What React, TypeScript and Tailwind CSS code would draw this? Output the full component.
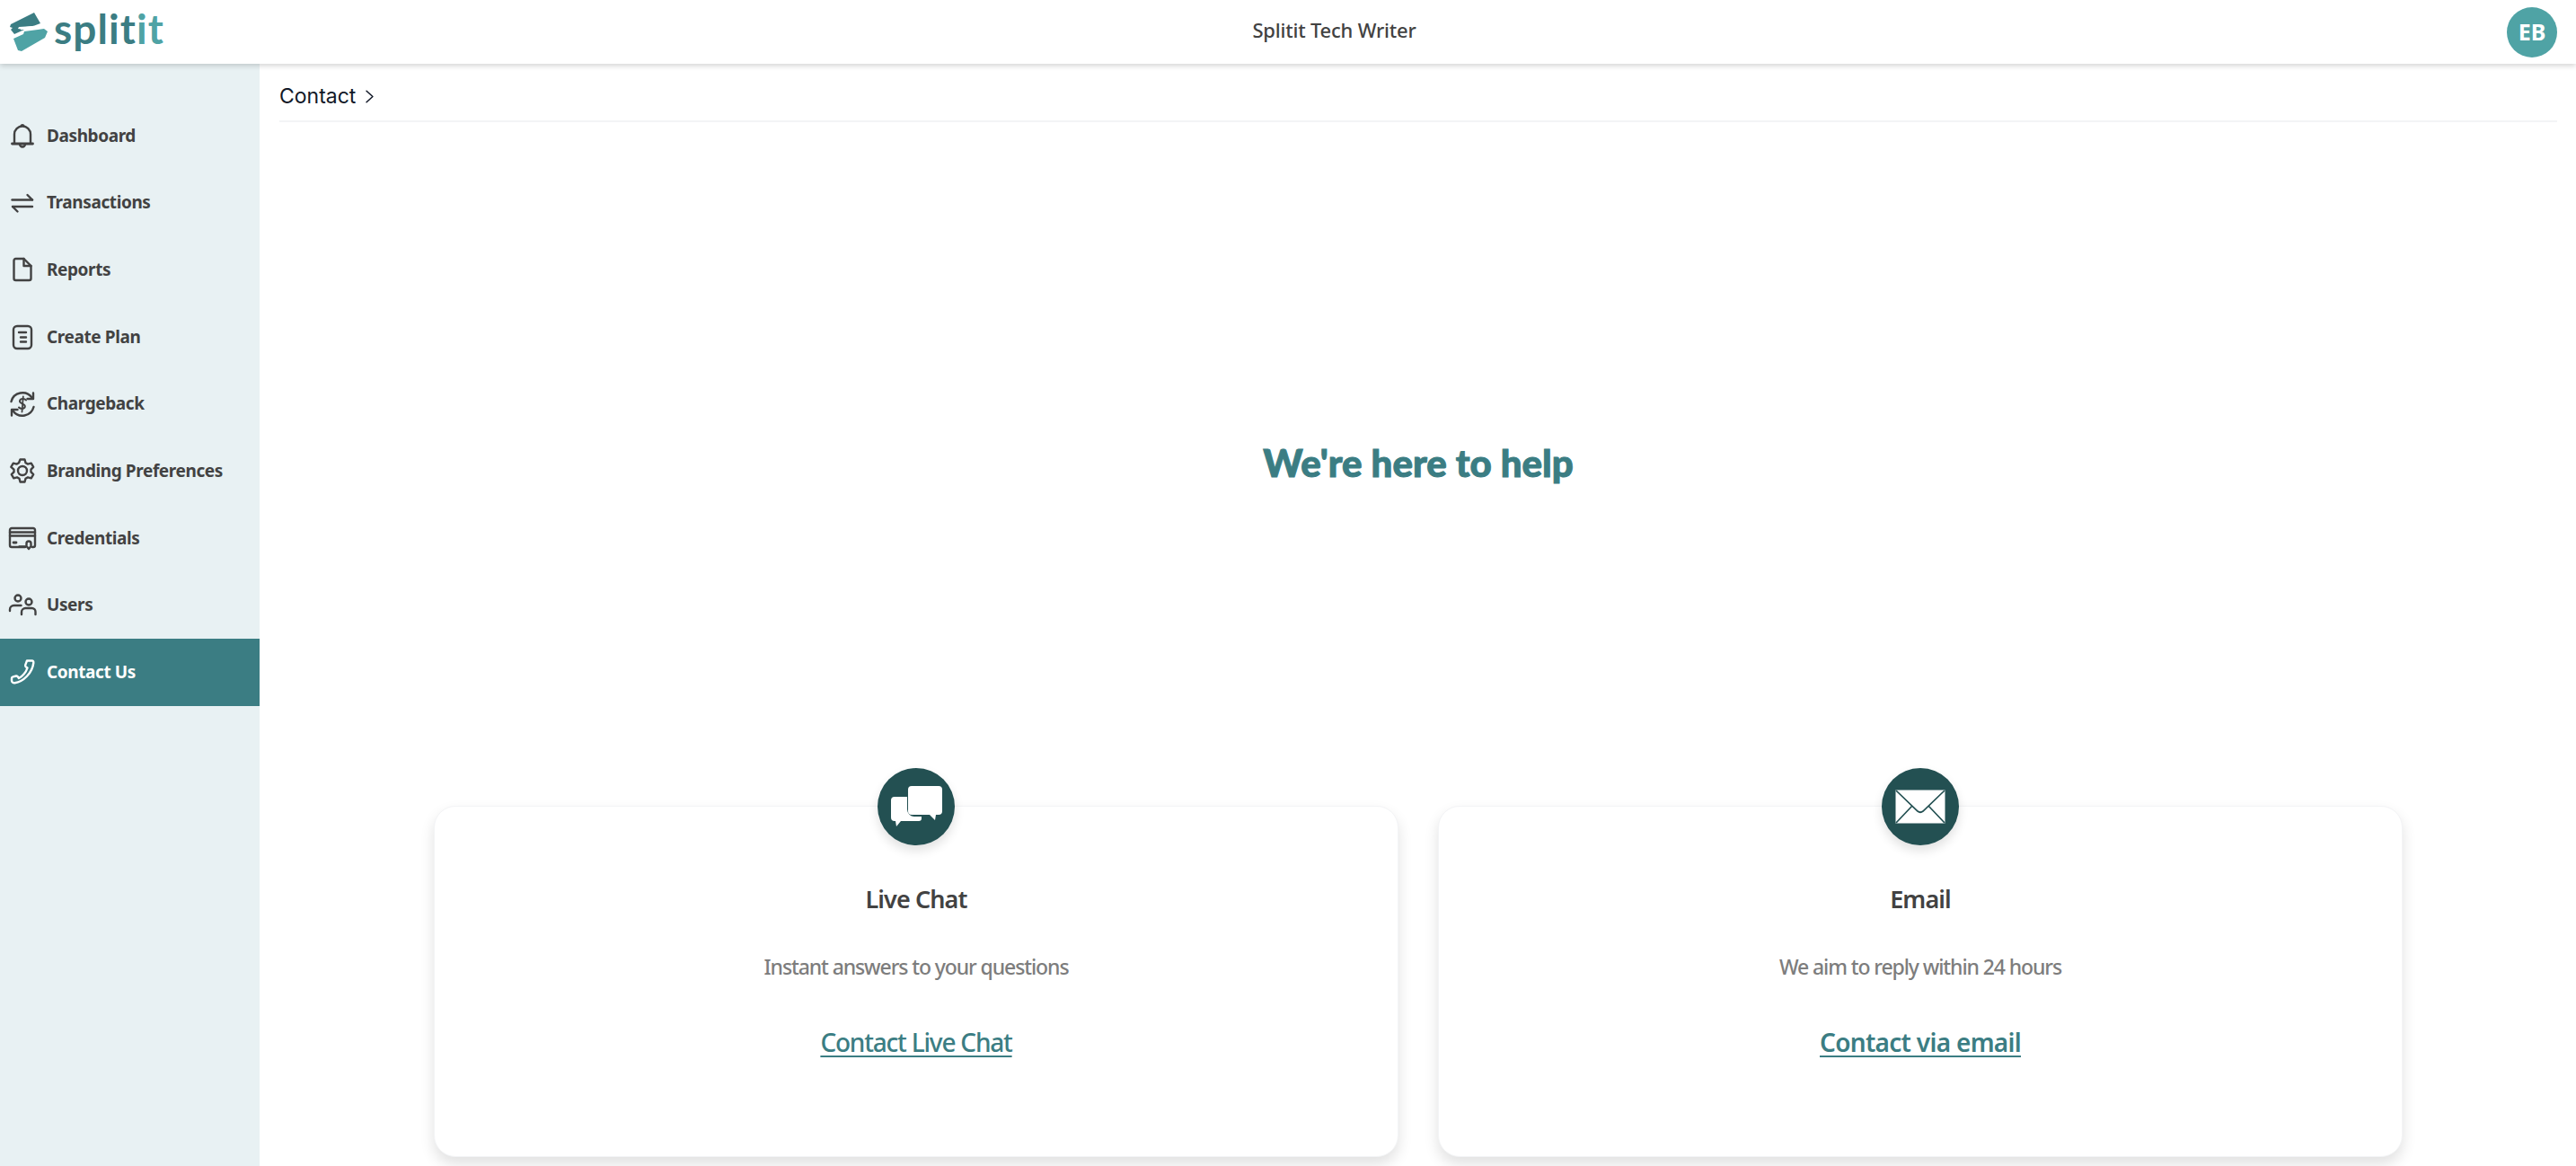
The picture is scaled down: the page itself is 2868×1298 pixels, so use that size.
import React from 'react';

const Svg: React.FC<{ children: React.ReactNode }> = ({ children }) => (
  <svg viewBox="0 0 32 32" width="32" height="32" fill="none" stroke="currentColor" strokeWidth="2.4" strokeLinecap="round" strokeLinejoin="round">
    {children}
  </svg>
);

const BellIcon = () => (
  <Svg>
    <path d="M14.5 5.2a1.6 1.6 0 0 1 3 0" />
    <path d="M7 24V14.5a9 9 0 0 1 18 0V24" />
    <path d="M4.5 25h23" strokeWidth="2.8" />
    <path d="M13 25.5a3 3 0 0 0 6 0" />
  </Svg>
);

const TransferIcon = () => (
  <Svg>
    <path d="M4.5 12.5h22.5" />
    <path d="M21.5 7l5.5 5.5" />
    <path d="M27 20H5" />
    <path d="M10.5 25.5L5 20" />
  </Svg>
);

const ReportIcon = () => (
  <Svg>
    <path d="M17.5 4H8.5a2 2 0 0 0-2 2v20a2 2 0 0 0 2 2h15a2 2 0 0 0 2-2V12z" />
    <path d="M17.5 4v8h8" />
  </Svg>
);

const PlanIcon = () => (
  <Svg>
    <rect x="6" y="4" width="20" height="25" rx="4" />
    <path d="M12 11h8M14 16.500h6M14 21.500h6" />
  </Svg>
);

const ChargebackIcon = () => (
  <Svg>
    <path d="M3.500 13A13 13 0 0 1 26.500 8.500" />
    <path d="M28 3.500V10h-6.500" />
    <path d="M28.500 19A13 13 0 0 1 5.500 23.500" />
    <path d="M4 28.500V22h6.500" />
    <path d="M20 11.500c-1.200-1.800-6.300-2.400-7 .7-.800 3.300 6.500 3 5.800 6.600-.6 2.800-5.300 2.500-6.800.7" strokeWidth="2" />
    <path d="M16.800 7.500l-1.300 17" strokeWidth="1.800" />
  </Svg>
);

const GearIcon = () => (
  <Svg>
    <circle cx="16" cy="16" r="5" />
    <path d="M13.500 3.500h5l1 3.700 2.500 1.400 3.700-1 2.500 4.300-2.700 2.700v2.800l2.700 2.700-2.500 4.300-3.700-1-2.500 1.400-1 3.700h-5l-1-3.700-2.500-1.400-3.700 1-2.500-4.300 2.700-2.700v-2.800L3.300 11.900l2.500-4.300 3.700 1 2.500-1.400z" />
  </Svg>
);

const CardIcon = () => (
  <Svg>
    <path d="M27 26h1a2 2 0 0 0 2-2V7a2 2 0 0 0-2-2H4a2 2 0 0 0-2 2v17a2 2 0 0 0 2 2h15" />
    <path d="M2 9.500h28M2 13.500h28" />
    <path d="M6 21h3" strokeWidth="2.800" />
    <path d="M12.500 25.500H19" />
    <path d="M23 28l-2.500-3v-3a2.500 2.500 0 0 1 5 0v3z" />
  </Svg>
);

const UsersIcon = () => (
  <Svg>
    <circle cx="11" cy="8" r="3.500" />
    <circle cx="23" cy="12" r="3.500" />
    <path d="M2 22v-1.500A4.500 4.500 0 0 1 6.500 16h8" />
    <path d="M15 26v-2.500a4.500 4.500 0 0 1 4.500-4.500h7a4 4 0 0 1 4 4v3" />
  </Svg>
);

const PhoneIcon = () => (
  <Svg>
    <path d="M21 3.500h5.500c1.500 0 2 1 1.800 2.500C27 17 17 27 7.500 28.300c-2 .2-3.500-1-3.500-2.800v-2.500c0-1 .6-1.500 1.500-1.700l3.500-.8c1-.2 1.500.2 2 1l1 1.500c3.500-1.500 8-6.500 9.500-11.500l-1.500-1c-.8-.6-1-1.200-.8-2.200z" />
  </Svg>
);

const ChatIcon = () => (
  <svg viewBox="0 0 58 46" width="58" height="46" fill="currentColor">
    <path d="M5 12h14v14a8 8 0 0 0 8 8h8v2a3 3 0 0 1-3 3H12l-5 6-1-6H5a4 4 0 0 1-4-4V16a4 4 0 0 1 4-4z" />
    <path d="M24 0h30a4 4 0 0 1 4 4v24a4 4 0 0 1-4 4h-3l-1 6-6-6H24a4 4 0 0 1-4-4V4a4 4 0 0 1 4-4z" />
  </svg>
);

const MailIcon = () => (
  <svg viewBox="0 0 56 38" width="56" height="38">
    <rect x="0.500" y="0.500" width="55" height="37" fill="#ffffff" />
    <path d="M1 1l24 23q3 2.500 6 0L55 1M1 37l18-19M55 37L37 18" fill="none" stroke="#235052" strokeWidth="1.700" />
  </svg>
);

const navItems = [
  { label: 'Dashboard', icon: <BellIcon /> },
  { label: 'Transactions', icon: <TransferIcon /> },
  { label: 'Reports', icon: <ReportIcon /> },
  { label: 'Create Plan', icon: <PlanIcon /> },
  { label: 'Chargeback', icon: <ChargebackIcon /> },
  { label: 'Branding Preferences', icon: <GearIcon /> },
  { label: 'Credentials', icon: <CardIcon /> },
  { label: 'Users', icon: <UsersIcon /> },
  { label: 'Contact Us', icon: <PhoneIcon />, active: true },
];

const Logo = () => (
  <div className="flex items-center w-[171px] h-[46px]">
    <svg viewBox="0 0 44 46" width="44" height="46" className="shrink-0">
      <path d="M3 14L29 1l7 12-8 3-16 1-1 2 7 1-11 5-4-5 2-2-3-1z" fill="#3b7d83" />
      <path d="M6 30l11-5 1-3 15-2 7-1 4 3-3 7-26 15-4-1z" fill="#4fa3a5" />
      <path d="M14 19l15-2" stroke="#ffffff" strokeWidth="2.500" fill="none" />
    </svg>
    <span className="ml-[7px] text-[46px] leading-none font-bold font-['Lato',sans-serif] tracking-[1.1px] text-[#3b7d83] -mt-[8px]">
      split<span className="text-[#4fa3a5]">it</span>
    </span>
  </div>
);

const ContactCard: React.FC<{ icon: React.ReactNode; title: string; text: string; link: string; linkClass: string }> = ({ icon, title, text, link, linkClass }) => (
  <div className="relative flex-1 h-[391px] bg-white rounded-[24px] border border-gray-100 shadow-[0_8px_16px_rgba(0,0,0,0.12)] flex flex-col items-center">
    <div className="absolute -top-[43px] w-[86px] h-[86px] rounded-full bg-[#235052] text-white flex items-center justify-center shadow-[0_6px_12px_rgba(0,0,0,0.12)]">
      {icon}
    </div>
    <h3 className="mt-[85px] text-[27px] leading-[36px] font-semibold text-[#424242] tracking-[-0.9px]">{title}</h3>
    <p className="mt-[41px] text-[23px] leading-[32px] font-medium text-[#7d7d7d] tracking-[-1.1px]">{text}</p>
    <a href="#" className={`mt-[49px] text-[28px] leading-[38px] text-[#3b7d83] underline underline-offset-4 ${linkClass}`}>{link}</a>
  </div>
);

export default function App() {
  return (
    <div className="h-screen overflow-hidden flex flex-col bg-white font-['Noto_Sans',sans-serif]">
      <header className="relative z-10 h-[71px] shrink-0 bg-white flex items-center justify-between pl-[9px] pr-[21px] shadow-[0_2px_6px_rgba(0,0,0,0.18)]">
        <Logo />
        <span className="text-[22px] font-medium text-[#424242] tracking-[-0.2px] -mt-[5px]">Splitit Tech Writer</span>
        <div className="w-[56px] h-[56px] rounded-full bg-[#4fa3a5] text-white text-[25px] font-bold flex items-center justify-center">EB</div>
      </header>

      <div className="flex flex-1 min-h-0">
        <aside className="w-[289px] shrink-0 bg-[#e8f1f3] pt-[42.5px]">
          {navItems.map((item) => (
            <div
              key={item.label}
              className={`h-[74.7px] flex items-center gap-[11px] pl-[9px] ${item.active ? 'bg-[#3b7d83] text-white' : 'text-[#424242]'}`}
            >
              <span className="w-8 h-8 shrink-0">{item.icon}</span>
              <span className="text-[19px] font-bold tracking-[-0.4px]">{item.label}</span>
            </div>
          ))}
        </aside>

        <main className="flex-1 min-w-0 pl-[22px] pr-[21px]">
          <div className="h-[65px] pt-[10px] border-b-2 border-gray-100 flex items-center gap-[10px] text-[#111827] font-['Inter',sans-serif] text-[23px]">
            <span>Contact</span>
            <svg viewBox="0 0 16 24" width="11" height="17" fill="none" stroke="currentColor" strokeWidth="2.200" strokeLinecap="round" strokeLinejoin="round">
              <path d="M3 3l10 9-10 9" />
            </svg>
          </div>

          <div className="h-[761px] flex items-center justify-center">
            <h1 className="text-[42px] -mt-[2px] font-black font-['Lato',sans-serif] text-[#3b7d83] [-webkit-text-stroke:1px_#3b7d83]">We're here to help</h1>
          </div>

          <div className="flex gap-[44px] px-[172px]">
            <ContactCard icon={<ChatIcon />} title="Live Chat" text="Instant answers to your questions" link="Contact Live Chat" linkClass="font-medium tracking-[-1.2px]" />
            <ContactCard icon={<MailIcon />} title="Email" text="We aim to reply within 24 hours" link="Contact via email" linkClass="font-semibold tracking-[-0.7px]" />
          </div>
        </main>
      </div>
    </div>
  );
}
